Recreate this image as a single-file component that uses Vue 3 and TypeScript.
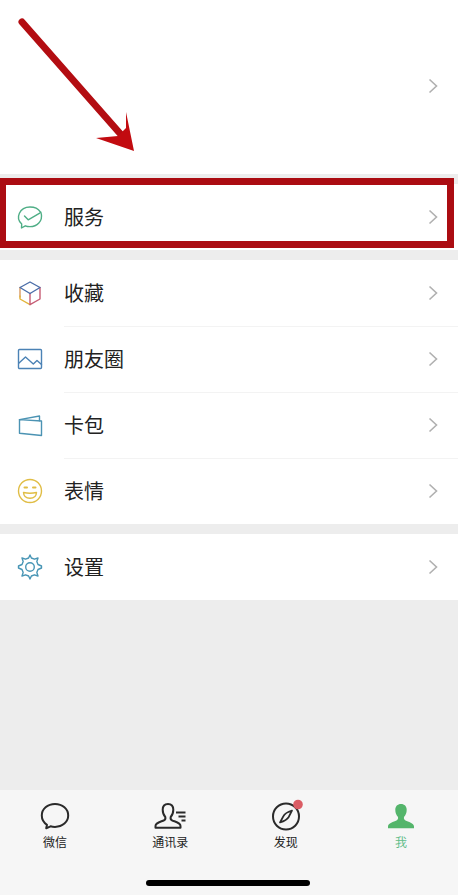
<script setup lang="ts">
import { ref } from 'vue'

type IconName = 'pay' | 'cube' | 'photo' | 'card' | 'smile' | 'gear'
interface Row {
  icon: IconName
  label: string
  marked?: boolean
}

const groups: Row[][] = [
  [{ icon: 'pay', label: '服务', marked: true }],
  [
    { icon: 'cube', label: '收藏' },
    { icon: 'photo', label: '朋友圈' },
    { icon: 'card', label: '卡包' },
    { icon: 'smile', label: '表情' },
  ],
  [{ icon: 'gear', label: '设置' }],
]

const tabs = ['微信', '通讯录', '发现', '我']
const active = ref(3)
</script>

<template>
  <div class="page">
    <main class="content">
      <section class="profile">
        <button class="profile-link" type="button" aria-label="个人信息">
          <svg class="chevron" viewBox="0 0 10 16"><path d="M1.5 1.5 8.5 8l-7 6.5" /></svg>
        </button>
        <svg class="arrow" viewBox="0 0 140 160" aria-hidden="true">
          <path d="M22 22 124 138" />
          <polygon points="134,151 96,138 118,136 126,128 126,112" />
        </svg>
      </section>

      <section v-for="(group, g) in groups" :key="g" class="group">
        <button
          v-for="row in group"
          :key="row.label"
          type="button"
          class="row"
          :class="{ marked: row.marked }"
        >
          <svg class="icon" viewBox="0 0 28 28" aria-hidden="true">
            <g v-if="row.icon === 'pay'" stroke="#4fae86">
              <path d="M25.300 10.800C26.800 18 21 23.600 14 23.600c-1.700 0-3.300-.2-4.700-.8L5.500 25l.2-4C-1 15 3.500 4 14 4c4.500 0 8.400 1.900 10.300 4.800" />
              <path d="m8.500 13 3.700 3.800L25 9.300" />
            </g>
            <g v-else-if="row.icon === 'cube'">
              <path stroke="#d99a62" d="M4 8.500V18" />
              <path stroke="#e2b53c" d="M4 17v3l10 5.600" />
              <path stroke="#c65c74" d="M24 8.500V20l-10 5.600V14.500" />
              <path stroke="#4a6da8" d="M4 8.500 14 3l10 5.500-10 6z" />
            </g>
            <g v-else-if="row.icon === 'photo'" stroke="#4b82b5">
              <rect x="2.500" y="4.500" width="23" height="19" rx="1" />
              <path d="m3 18 6.500-6 7.800 7 3.700-3.500 4.500 4" />
            </g>
            <g v-else-if="row.icon === 'card'" stroke="#4b93b3">
              <path d="M3.500 8.600 25.500 10v14.500l-22-2.300z" />
              <path d="M3.500 8.600 23.500 5v4.800" />
            </g>
            <g v-else-if="row.icon === 'smile'" stroke="#e0bd45">
              <circle cx="14" cy="14" r="11.500" />
              <path d="M7.500 15.500c4.500 1 8.500 1 13 0-.2 3.500-2.800 5.800-6.500 5.800s-6.300-2.300-6.500-5.800z" />
              <path d="M8.500 10.500h2.500M17 10.500h2.500" stroke-width="2" />
            </g>
            <g v-else stroke="#4895b5">
              <path d="m12.600 5 1.400-3 1.400 3 3 1.200 3.600-1.200-1.200 3.600 1.200 2.900 3.500 1.500v2l-3.500 1.500-1.200 2.900 1.200 3.600-3.600-1.200-3 1.200-1.400 3-1.400-3-3-1.200L6 23l1.200-3.600L6 16.500 2.500 15v-2L6 11.500l1.200-2.900L6 5l3.600 1.200z" />
              <circle cx="14" cy="14" r="4.300" />
            </g>
          </svg>
          <span class="label">{{ row.label }}</span>
          <svg class="chevron" viewBox="0 0 10 16" aria-hidden="true"><path d="M1.500 1.500 8.500 8l-7 6.500" /></svg>
        </button>
      </section>
    </main>

    <nav class="tabbar">
      <div class="tabs">
        <button
          v-for="(tab, i) in tabs"
          :key="tab"
          type="button"
          class="tab"
          :class="{ active: active === i }"
          @click="active = i"
        >
          <svg class="tab-icon" viewBox="0 0 32 32" aria-hidden="true">
            <path v-if="i === 0" d="M16 4C8.500 4 2.800 9 2.800 15.500c0 4 2 7.200 5.200 9.300l-.8 3.500 4.300-2c1.400.4 3 .6 4.500.6 7.500 0 13.200-5 13.200-11.400S23.500 4 16 4z" />
            <g v-else-if="i === 1">
              <path d="M14 4c-3.300 0-5.300 2.400-5.300 5.800 0 3 1 5.500 2.600 7.200.4 1.600 0 2.600-1.300 3.300C7.500 21.600 1.500 22.500 1.500 26v1.800h25V26c0-3.500-6-4.400-8.500-5.700-1.300-.7-1.700-1.700-1.300-3.300 1.600-1.700 2.600-4.200 2.600-7.200C19.300 6.400 17.300 4 14 4z" />
              <path d="M22 12.500h9.500M24.500 16.500h7M27.500 20.500h4" />
            </g>
            <g v-else-if="i === 2">
              <circle cx="16" cy="16.500" r="13" />
              <path d="M22 10.500c-4.500 1.500-7.500 3.500-8.500 5.500L10 22.500c5-1.500 7.500-3.500 8.700-5.500z" stroke-width="1.700" />
              <circle class="dot" cx="28" cy="4.500" r="4.800" />
            </g>
            <path v-else class="solid" d="M16 4c-3.500 0-5.700 2.400-5.700 5.800 0 3 1 5.500 2.700 7.200.3 1.700-.1 2.700-1.500 3.400C8.800 21.700 3 22.800 3 26.500v1.800h26v-1.800c0-3.700-5.800-4.800-8.500-6.100-1.400-.7-1.800-1.700-1.500-3.400 1.700-1.700 2.700-4.200 2.700-7.200C21.700 6.400 19.500 4 16 4z" />
          </svg>
          <span>{{ tab }}</span>
        </button>
      </div>
      <div class="home-indicator"></div>
    </nav>
  </div>
</template>

<style>
body {
  background: #ededed;
}
</style>

<style scoped>
.page {
  min-height: 100vh;
  display: flex;
  flex-direction: column;
  background: #ededed;
  font-family: "Liberation Sans", "Noto Sans CJK SC", sans-serif;
  color: #222;
}
button {
  margin: 0;
  padding: 0;
  border: 0;
  background: none;
  font: inherit;
  color: inherit;
  cursor: pointer;
}
svg {
  display: block;
  flex: none;
  fill: none;
  overflow: visible;
}
.content {
  flex: 1;
  display: flex;
  flex-direction: column;
  gap: 10px;
}
.profile {
  position: relative;
  background: #fff;
}
.profile-link {
  width: 100%;
  height: 174px;
  padding: 0 20px 2px;
  display: flex;
  align-items: center;
  justify-content: flex-end;
}
.arrow {
  position: absolute;
  top: 0;
  left: 0;
  width: 140px;
  height: 160px;
  pointer-events: none;
}
.arrow path {
  stroke: #b30d12;
  stroke-width: 7;
  stroke-linecap: round;
}
.arrow polygon {
  fill: #c20b10;
}
.group {
  background: #fff;
}
.row {
  position: relative;
  width: 100%;
  height: 66px;
  padding: 0 20px 0 16px;
  display: flex;
  align-items: center;
  gap: 20px;
  text-align: left;
}
.row + .row::before {
  content: "";
  position: absolute;
  top: 0;
  left: 64px;
  right: 0;
  height: 1px;
  background: #f3f3f3;
}
.row.marked::after {
  content: "";
  position: absolute;
  inset: -6px 4px 2px -1px;
  border: 7px solid #ab0c12;
}
.icon {
  width: 28px;
  height: 28px;
  stroke-width: 1.4;
  stroke-linejoin: round;
  stroke-linecap: round;
}
.label {
  flex: 1;
  padding-top: 2px;
  font-size: 20px;
  line-height: 28px;
}
.chevron {
  width: 10px;
  height: 16px;
  stroke: #b0b0b0;
  stroke-width: 1.6;
}
.tabbar {
  height: 105px;
  box-sizing: border-box;
  padding: 10px 37px 9px 35px;
  display: flex;
  flex-direction: column;
  justify-content: space-between;
  background: #f6f6f6;
}
.tabs {
  display: flex;
  justify-content: space-between;
}
.tab {
  width: 40px;
  display: flex;
  flex-direction: column;
  align-items: center;
  gap: 2px;
  font-size: 12px;
  line-height: 18px;
  white-space: nowrap;
}
.tab-icon {
  width: 32px;
  height: 32px;
  stroke: #2a2a2a;
  stroke-width: 2;
  stroke-linejoin: round;
}
.tab-icon .dot {
  fill: #db5c64;
  stroke: none;
}
.tab-icon .solid {
  fill: #54b56b;
  stroke: none;
}
.tab.active {
  color: #62bd8a;
}
.home-indicator {
  width: 164px;
  height: 6px;
  align-self: center;
  border-radius: 3px;
  background: #000;
}
</style>
